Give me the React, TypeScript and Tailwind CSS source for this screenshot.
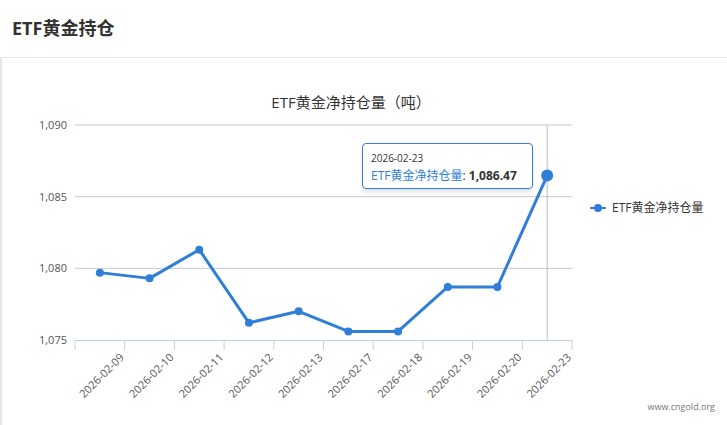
const data = [1079.7, 1079.3, 1081.3, 1076.2, 1077.0, 1075.6, 1075.6, 1078.7, 1078.7, 1086.47];
const dates = ["2026-02-09", "2026-02-10", "2026-02-11", "2026-02-12", "2026-02-13", "2026-02-17", "2026-02-18", "2026-02-19", "2026-02-20", "2026-02-23"];

const X0 = 73;
const X1 = 570;
const step = (X1 - X0) / 10;
const yOf = (v: number) => 340 - ((v - 1075) * 215) / 15;
const xOf = (i: number) => X0 + step * (i + 0.5);

function Chart() {
  const pts = data.map((v, i) => `${xOf(i)},${yOf(v)}`).join(" ");
  return (
    <svg width="725" height="367" viewBox="0 58 725 367" className="block" style={{ fontFamily: '"Open Sans","Noto Sans CJK SC",sans-serif' }}>
      <text x="349" y="108" textAnchor="middle" fontSize="15" fill="#333">ETF黄金净持仓量（吨）</text>
      {[1090, 1085, 1080].map((v) => (
        <line key={v} x1={X0} x2={X1} y1={yOf(v)} y2={yOf(v)} stroke="#c8c8c8" />
      ))}
      <line x1={X0} x2={X1} y1={340.5} y2={340.5} stroke="#c0d0e0" />
      {Array.from({ length: 11 }, (_, i) => (
        <line key={i} x1={X0 + step * i} x2={X0 + step * i} y1={340} y2={350} stroke="#c0d0e0" />
      ))}
      {[1090, 1085, 1080, 1075].map((v) => (
        <text key={v} x="65" y={yOf(v) + 4} textAnchor="end" fontSize="11" fill="#555">{v.toLocaleString("en-US")}</text>
      ))}
      <line x1={xOf(9)} x2={xOf(9)} y1={125} y2={340} stroke="#bbb" />
      <polyline points={pts} fill="none" stroke="#2f7ed8" strokeWidth="3" strokeLinejoin="round" />
      {data.map((v, i) => (
        <circle key={i} cx={xOf(i)} cy={yOf(v)} r={i === 9 ? 6 : 4} fill="#2f7ed8" />
      ))}
      {dates.map((d, i) => (
        <text key={d} x={X0 + step * (i + 1)} y={358} textAnchor="end" fontSize="11" fill="#555" transform={`rotate(-45 ${X0 + step * (i + 1)} 358)`}>{d}</text>
      ))}
      <line x1="588" x2="604" y1="208" y2="208" stroke="#2f7ed8" strokeWidth="2" />
      <circle cx="596" cy="208" r="4" fill="#2f7ed8" />
      <text x="610" y="212" fontSize="12" fill="#333">ETF黄金净持仓量</text>
      <text x="713" y="410" textAnchor="end" fontSize="9" fill="#777">www.cngold.org</text>
    </svg>
  );
}

export default function App() {
  return (
    <div className="w-[727px] h-[425px] bg-white overflow-hidden" style={{ fontFamily: '"Open Sans","Noto Sans CJK SC",sans-serif' }}>
      <div className="h-[58px] flex items-center pl-3 border-b border-[#e6e6e6]">
        <h1 className="text-[18px] font-bold text-[#333]">ETF黄金持仓</h1>
      </div>
      <div className="relative border-l-2 border-[#e6e6e6] h-[367px]">
        <Chart />
        <div className="absolute left-[360px] top-[85px] w-[171px] h-[46px] bg-white/95 border border-[#2f7ed8] rounded shadow-md px-2 pt-1.5 text-[11px] leading-[17px]">
          <div className="text-[#333] text-[10px]">2026-02-23</div>
          <div className="text-[12px]">
            <span className="text-[#2f7ed8]">ETF黄金净持仓量</span>
            <span className="text-[#333]">: </span>
            <span className="font-bold text-[#333]">1,086.47</span>
          </div>
        </div>
      </div>
    </div>
  );
}
